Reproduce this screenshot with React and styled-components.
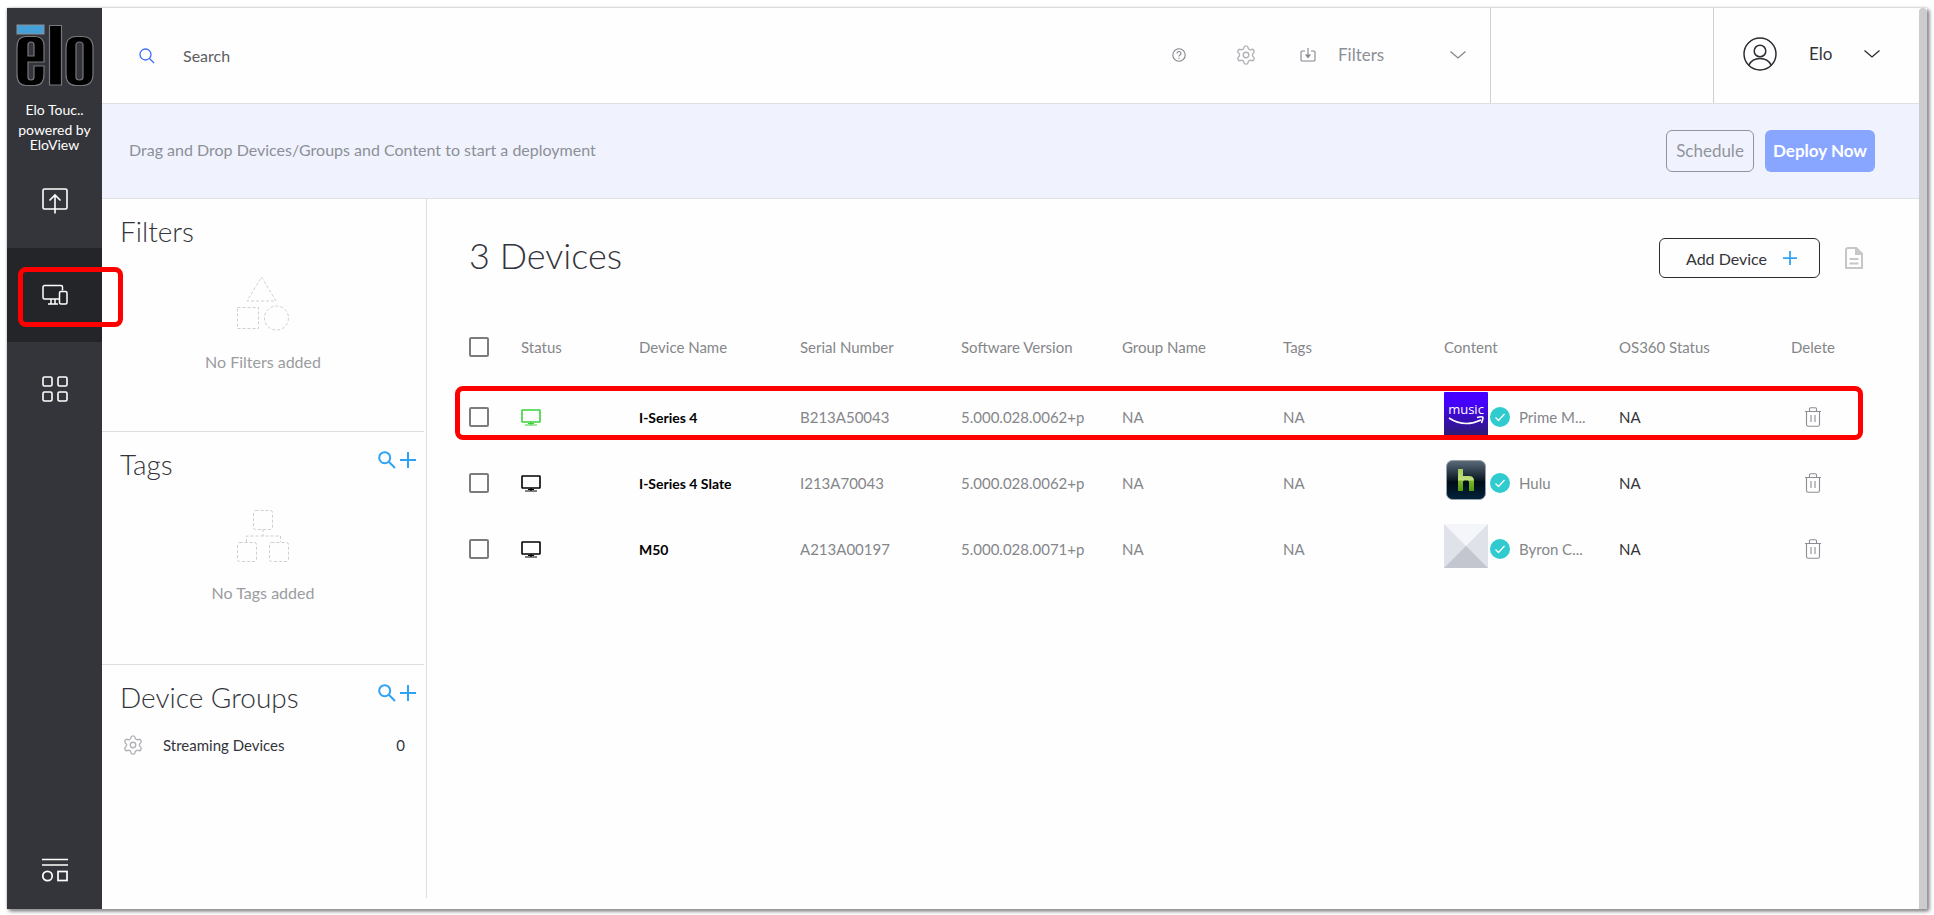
import React, { useState } from 'react'
import styled, { createGlobalStyle } from "styled-components";
import { Settings } from "lucide-react";

const data = [
  {
    name: "I-Series 4",
    serial: "B213A50043",
    version: "5.000.028.0062+p",
    content: "Prime M...",
    thumb: "music",
    online: true,
    highlighted: true
  },
  {
    name: "I-Series 4 Slate",
    serial: "I213A70043",
    version: "5.000.028.0062+p",
    content: "Hulu",
    thumb: "hulu"
  },
  {
    name: "M50",
    serial: "A213A00197",
    version: "5.000.028.0071+p",
    content: "Byron C...",
    thumb: "blank"
  },
]

const columns = [
  "Status",
  "Device Name",
  "Serial Number",
  "Software Version",
  "Group Name",
  "Tags",
  "Content",
  "OS360 Status",
  "Delete",
];

const Logo = () => (
  <svg width="78" height="64" viewBox="0 0 78 64" role="img" aria-label="elo">
    <rect x="1" y="1" width="27" height="9" fill="#46a0d8" stroke="#8a9298" />
    <g fill="#000" stroke="#77787b" strokeWidth="1.2" fillRule="evenodd">
      <path d="M10 12.500H19C25 12.500 28 16 28 22V38H12V53Q12 56 15 56T18 53V42H28V50C28 58 25 61.500 19 61.500H10C4 61.500 1 58 1 50V24C1 16 4 12.500 10 12.500ZM12 21V32H18V21Q18 18 15 18T12 21Z" />
      <path d="M33.500 1.500H45.500V61H33.500Z" />
      <path d="M60 12.500H66C74 12.500 77 17 77 24V50C77 57 74 61.500 66 61.500H60C53 61.500 50 57 50 50V24C50 17 53 12.500 60 12.500ZM60 21V53Q60 56 63.500 56T67 53V21Q67 18 63.500 18T60 21Z" />
    </g>
  </svg>
)

const DeployIcon = () => (
  <svg width="26" height="26" viewBox="0 0 26 26" fill="none" stroke="#fff" strokeWidth="1.6">
    <rect x="1" y="1" width="24" height="20" rx="1.500" />
    <path d="M13 25.500V7M7.500 12.500L13 7L18.500 12.500" />
  </svg>
)

const DevicesIcon = () => (
  <svg width="26" height="22" viewBox="0 0 26 22" fill="none" stroke="#fff" strokeWidth="1.5">
    <path d="M17 15H2.500A1.500 1.500 0 0 1 1 13.500V3A1.500 1.500 0 0 1 2.500 1.500H19A1.500 1.500 0 0 1 20.500 3V6.500M9 15V20M13 15V20M6 20H16" />
    <rect x="17.500" y="7.500" width="7.500" height="12.500" rx="1.500" />
  </svg>
)

const GridIcon = () => (
  <svg width="26" height="26" viewBox="0 0 26 26" fill="none" stroke="#fff" strokeWidth="1.6">
    <rect x="1" y="1" width="9" height="9" rx="1.500" />
    <rect x="16" y="1" width="9" height="9" rx="1.500" />
    <rect x="1" y="16" width="9" height="9" rx="1.500" />
    <rect x="16" y="16" width="9" height="9" rx="1.500" />
  </svg>
)

const WidgetsIcon = () => (
  <svg width="26" height="24" viewBox="0 0 26 24" fill="none" stroke="#fff" strokeWidth="1.7">
    <path d="M0 1.500H26M0 7H26" />
    <circle cx="5.500" cy="18" r="4.700" />
    <rect x="16" y="13.500" width="9" height="9" />
  </svg>
)

const ThinSearch = () => (
  <svg width="16" height="16" viewBox="0 0 16 16" fill="none" stroke="#3b6dff" strokeWidth="1.300">
    <circle cx="6.500" cy="6.500" r="5.500" />
    <path d="M10.500 10.500L15 15" />
  </svg>
)

const BoldSearch = () => (
  <svg width="18" height="18" viewBox="0 0 18 18" fill="none" stroke="#2ea3f5" strokeWidth="2">
    <circle cx="6.700" cy="6.700" r="5.500" />
    <path d="M10.800 10.800L17 17" />
  </svg>
)

const Plus = ({ size, weight }) => (
  <svg width={size} height={size} viewBox="0 0 16 16" fill="none" stroke="#2ea3f5" strokeWidth={weight}>
    <path d="M8 0V16M0 8H16" />
  </svg>
)

const Help = () => (
  <svg width="14" height="14" viewBox="0 0 14 14" fill="none" stroke="#84868c" strokeWidth="1.100">
    <circle cx="7" cy="7" r="6.200" />
    <path d="M5 5.500A2 1.900 0 1 1 7.800 7.200Q7 7.600 7 8.600M7 9.700V10.900" />
  </svg>
)

const Gear = () => <Settings size={22} color="#b0b1b6" strokeWidth={1.5} />

const Import = () => (
  <svg width="16" height="14" viewBox="0 0 16 14" fill="none" stroke="#84868c" strokeWidth="1.100">
    <path d="M5 3H2Q1 3 1 4V12Q1 13 2 13H14Q15 13 15 12V4Q15 3 14 3H11M8 0V8" />
    <path d="M6 7H10L8 9.500Z" fill="#84868c" />
  </svg>
)

const Chevron = ({ color }) => (
  <svg width="16" height="8" viewBox="0 0 16 8" fill="none" stroke={color} strokeWidth="1.300">
    <path d="M0.500 0.500L8 7L15.500 0.500" />
  </svg>
)

const Avatar = () => (
  <svg width="34" height="34" viewBox="0 0 34 34" fill="none" stroke="#2b2c32" strokeWidth="1.500">
    <circle cx="17" cy="17" r="16" />
    <circle cx="17" cy="14" r="5.800" />
    <path d="M6 28Q9 21.500 17 21.500T28 28" />
  </svg>
)

const Report = () => (
  <svg width="18" height="22" viewBox="0 0 18 22" fill="none" stroke="#c6c7c9" strokeWidth="2">
    <path d="M3 1H11L17 7V21H1V3Q1 1 3 1Z" strokeLinejoin="round" />
    <path d="M11 1V7H17Z" fill="#c6c7c9" />
    <path d="M4.500 12H13.500M4.500 16.500H13.500" />
  </svg>
)

const Shapes = () => (
  <svg width="54" height="56" viewBox="0 0 54 56" fill="none" stroke="#cfcfd3" strokeDasharray="3 2">
    <path d="M25.500 1L40 25H11Z" />
    <rect x="1.500" y="31.500" width="21" height="21" />
    <circle cx="40.500" cy="42" r="12" />
  </svg>
)

const Tree = () => (
  <svg width="54" height="54" viewBox="0 0 54 54" fill="none" stroke="#cfcfd3" strokeDasharray="3 2">
    <rect x="17.500" y="1.500" width="19" height="19" rx="2" />
    <rect x="1.500" y="33.500" width="19" height="19" rx="2" />
    <rect x="33.500" y="33.500" width="19" height="19" rx="2" />
    <path d="M27 20V27M10.500 33V27H44.500V33" />
  </svg>
)

const Monitor = ({ online }) => (
  <svg width="20" height="17" viewBox="0 0 20 17" fill="none" stroke={online ? "#3ad13a" : "#000"} strokeWidth="1.600" role="img" aria-label={online ? "Online" : "Offline"}>
    <rect x="1" y="1" width="18" height="12" rx="0.500" />
    <path d="M10 13V15.500M7 14.500H13M4 16H16" strokeWidth="1.200" />
  </svg>
)

const Check = () => (
  <svg width="20" height="20" viewBox="0 0 20 20" fill="none">
    <circle cx="10" cy="10" r="10" fill="#2fcbcf" />
    <path d="M5.500 10.500L8.500 13.500L14.500 7" stroke="#fff" strokeWidth="1.300" />
  </svg>
)

const Trash = () => (
  <svg width="16" height="20" viewBox="0 0 16 20" fill="none" stroke="#8b8d95" strokeWidth="1.100">
    <path d="M0 4.500H16M4.500 4.500V2Q4.500 0.800 5.700 0.800H10.300Q11.500 0.800 11.500 2V4.500M1.500 4.500V17.500Q1.500 19.300 3.300 19.300H12.700Q14.500 19.300 14.500 17.500V4.500M6 8V15M10 8V15" />
  </svg>
)

const Thumb = ({ kind }) => {
  if (kind === "music") {
    return (
      <svg width="44" height="44" viewBox="0 0 44 44">
        <defs>
          <linearGradient id="music" x1="0" y1="0" x2="0" y2="1">
            <stop offset="0.250" stopColor="#4600ff" />
            <stop offset="1" stopColor="#2c1c70" />
          </linearGradient>
        </defs>
        <rect width="44" height="44" rx="1" fill="url(#music)" />
        <text x="22" y="22" textAnchor="middle" fontSize="13" fontFamily="Open Sans" fill="#fff">music</text>
        <path d="M5 26Q20 36 37 28M33 25.500Q39 24 39 25.500T37.500 31" fill="none" stroke="#fff" strokeWidth="1.600" />
      </svg>
    )
  }
  if (kind === "hulu") {
    return (
      <svg width="44" height="44" viewBox="0 0 44 44">
        <defs>
          <linearGradient id="hulu" x1="0" y1="0" x2="0" y2="1">
            <stop offset="0" stopColor="#5b6c7b" />
            <stop offset="0.500" stopColor="#0d1a24" />
            <stop offset="0.550" stopColor="#000d16" />
            <stop offset="1" stopColor="#02233c" />
          </linearGradient>
          <linearGradient id="leaf" x1="0" y1="0" x2="0" y2="1">
            <stop offset="0" stopColor="#a3cd5c" />
            <stop offset="0.500" stopColor="#c3e07f" />
            <stop offset="0.550" stopColor="#7fb52f" />
            <stop offset="1" stopColor="#529a10" />
          </linearGradient>
        </defs>
        <rect x="2.500" y="2.500" width="39" height="39" rx="6" fill="url(#hulu)" stroke="#9aa3aa" />
        <path d="M14 11H19V18H25Q30 18 30 23V33H25V24Q25 22.500 23.500 22.500H20.500Q19 22.500 19 24V33H14Z" fill="url(#leaf)" />
      </svg>
    )
  }
  return (
    <svg width="44" height="44" viewBox="0 0 44 44">
      <rect width="44" height="44" fill="#dfe2e9" />
      <path d="M0 0H44L22 22Z" fill="#f4f6fa" />
      <path d="M0 44H44L22 22Z" fill="#c3c6cf" />
    </svg>
  )
}

const App = () => {

  const [page, setPage] = useState("devices");
  const [selected, setSelected] = useState([]);

  const toggle = (name) => {
    setSelected(selected.includes(name) ? selected.filter((n) => n !== name) : [...selected, name]);
  }

  const toggleAll = () => {
    setSelected(selected.length === data.length ? [] : data.map((device) => device.name));
  }

  return (
    <Frame>
      <GlobalStyle />
      <Sidebar>
        <Brand>
          <Logo />
          <p>Elo Touc..</p>
          <small>powered by EloView</small>
        </Brand>
        <NavButton aria-label="Deploy" $active={page === "deploy"} onClick={() => setPage("deploy")}><DeployIcon /></NavButton>
        <NavButton aria-label="Devices" $active={page === "devices"} onClick={() => setPage("devices")}>
          <DevicesIcon />
          <NavMark />
        </NavButton>
        <NavButton aria-label="Apps" $active={page === "apps"} onClick={() => setPage("apps")}><GridIcon /></NavButton>
        <NavButton aria-label="Widgets" $last onClick={() => setPage("widgets")}><WidgetsIcon /></NavButton>
      </Sidebar>
      <Page>
        <Header>
          <SearchBox>
            <ThinSearch />
            <input type="text" placeholder="Search" aria-label="Search" />
          </SearchBox>
          <Tools>
            <IconButton aria-label="Help"><Help /></IconButton>
            <IconButton aria-label="Settings"><Gear /></IconButton>
            <FilterButton>
              <Import />
              <span>Filters</span>
              <Chevron color="#84868c" />
            </FilterButton>
          </Tools>
          <Spacer />
          <Account>
            <Avatar />
            <span>Elo</span>
            <Chevron color="#2b2c32" />
          </Account>
        </Header>
        <Banner>
          <p>Drag and Drop Devices/Groups and Content to start a deployment</p>
          <Schedule>Schedule</Schedule>
          <Deploy>Deploy Now</Deploy>
        </Banner>
        <Body>
          <Panels>
            <Panel>
              <PanelHead><h2>Filters</h2></PanelHead>
              <Empty>
                <Shapes />
                <p>No Filters added</p>
              </Empty>
            </Panel>
            <Panel>
              <PanelHead>
                <h2>Tags</h2>
                <IconButton aria-label="Search tags"><BoldSearch /></IconButton>
                <IconButton aria-label="Add tag"><Plus size="16" weight="2" /></IconButton>
              </PanelHead>
              <Empty>
                <Tree />
                <p>No Tags added</p>
              </Empty>
            </Panel>
            <Panel>
              <PanelHead>
                <h2>Device Groups</h2>
                <IconButton aria-label="Search device groups"><BoldSearch /></IconButton>
                <IconButton aria-label="Add device group"><Plus size="16" weight="2" /></IconButton>
              </PanelHead>
              <Group>
                <Gear />
                <span>Streaming Devices</span>
                <span>0</span>
              </Group>
            </Panel>
          </Panels>
          <Main>
            <TitleRow>
              <h1>3 Devices</h1>
              <AddButton>Add Device <Plus size="14" weight="2" /></AddButton>
              <IconButton aria-label="Report"><Report /></IconButton>
            </TitleRow>
            <Table>
              <colgroup>
                <col className="check" />
                <col className="status" />
                <col /><col /><col /><col /><col />
                <col className="content" />
                <col />
                <col className="delete" />
              </colgroup>
              <thead>
                <tr>
                  <th><Checkbox aria-label="Select all" checked={selected.length === data.length} onChange={toggleAll} /></th>
                  {
                    columns.map((column) => <th key={column}>{column}</th>)
                  }
                </tr>
              </thead>
              <tbody>
                {
                  data.map((device) => {
                    return (
                      <tr key={device.name}>
                        <td>
                          <Checkbox aria-label={device.name} checked={selected.includes(device.name)} onChange={() => toggle(device.name)} />
                          {device.highlighted && <RowMark />}
                        </td>
                        <td><Monitor online={device.online} /></td>
                        <td className="name">{device.name}</td>
                        <td>{device.serial}</td>
                        <td>{device.version}</td>
                        <td>NA</td>
                        <td>NA</td>
                        <td>
                          <Content>
                            <Thumb kind={device.thumb} />
                            <Check />
                            <span>{device.content}</span>
                          </Content>
                        </td>
                        <td className="os">NA</td>
                        <td><IconButton aria-label={"Delete " + device.name}><Trash /></IconButton></td>
                      </tr>
                    )
                  })
                }
              </tbody>
            </Table>
          </Main>
        </Body>
      </Page>
      <Scrollbar />
    </Frame>
  )
}

export default App

const GlobalStyle = createGlobalStyle`
  *{
    box-sizing:border-box;
    margin:0;
    padding:0;
  }
  body{
    background:#fff;
    font-family:Lato, "Liberation Sans", sans-serif;
    font-size:16px;
    color:#33343a;
  }
  button, input{
    font:inherit;
    color:inherit;
    background:none;
    border:none;
  }
  button{
    cursor:pointer;
  }
  svg{
    display:block;
    flex-shrink:0;
  }
`;

const Frame = styled.div`
  display:flex;
  min-height:calc(100vh - 15px);
  margin:8px 7px 7px;
  background:#fefefe;
  box-shadow:0 0 2px #bbb, 2px 2px 4px #666;
`;

const Sidebar = styled.nav`
  display:flex;
  flex-direction:column;
  width:95px;
  flex-shrink:0;
  background:#34353a;
`;

const Brand = styled.div`
  display:flex;
  flex-direction:column;
  align-items:center;
  height:146px;
  padding-top:16px;
  color:#fff;
  font-size:14px;
  line-height:15px;
  text-align:center;
  p{
    margin:14px 0 5px;
  }
  small{
    width:80px;
    font-size:14px;
  }
`;

const NavButton = styled.button`
  position:relative;
  display:flex;
  align-items:center;
  justify-content:center;
  height:${(props) => props.$last ? "78px" : "94px"};
  background:${(props) => props.$active ? "#242529" : "transparent"};
  margin-top:${(props) => props.$last ? "auto" : "0"};
`;

const NavMark = styled.span`
  position:absolute;
  top:19px;
  left:11px;
  right:-21px;
  height:60px;
  border:5px solid #f00;
  border-radius:8px;
  z-index:1;
`;

const Page = styled.div`
  display:flex;
  flex-direction:column;
  flex:1;
  min-width:0;
`;

const Header = styled.header`
  display:flex;
  height:96px;
  border-bottom:1px solid #dedfe3;
`;

const SearchBox = styled.div`
  display:flex;
  align-items:center;
  flex:1;
  gap:28px;
  padding-left:37px;
  input{
    flex:1;
    height:40px;
    outline:none;
  }
  input::placeholder{
    color:#5c5d61;
    opacity:1;
  }
`;

const IconButton = styled.button`
  display:flex;
  align-items:center;
  justify-content:center;
`;

const Tools = styled.div`
  display:flex;
  align-items:center;
  gap:49px;
  padding:0 24px 2px 0;
  border-right:1px solid #cfcfd2;
`;

const FilterButton = styled.button`
  display:flex;
  align-items:center;
  gap:22px;
  margin-left:-6px;
  color:#8d8f96;
  font-size:17px;
  span{
    width:90px;
    text-align:left;
  }
`;

const Spacer = styled.div`
  width:223px;
  border-right:1px solid #cfcfd2;
`;

const Account = styled.button`
  display:flex;
  align-items:center;
  gap:32px;
  width:205px;
  padding:0 0 4px 29px;
  font-size:17px;
`;

const Banner = styled.section`
  display:flex;
  align-items:center;
  gap:11px;
  height:95px;
  padding:0 44px 0 27px;
  background:#f0f3fd;
  border-bottom:1px solid #dedfe3;
  p{
    flex:1;
    padding-bottom:4px;
    color:#8d8f98;
  }
`;

const Schedule = styled.button`
  height:42px;
  width:88px;
  padding-bottom:2px;
  border:1px solid #92949c;
  border-radius:6px;
  color:#92949c;
  font-size:17px;
`;

const Deploy = styled.button`
  height:42px;
  width:110px;
  padding-bottom:2px;
  border-radius:6px;
  background:#88a6ff;
  color:#fff;
  font-size:17px;
  font-weight:bold;
`;

const Body = styled.div`
  display:flex;
  flex:1;
`;

const Panels = styled.aside`
  width:325px;
  flex-shrink:0;
  margin-bottom:11px;
  border-right:1px solid #dedee0;
`;

const Panel = styled.section`
  height:233px;
  margin-right:2px;
  border-bottom:1px solid #dedee0;
  &:last-child{
    border-bottom:none;
  }
`;

const PanelHead = styled.div`
  display:flex;
  align-items:center;
  gap:4px;
  height:56px;
  padding:0 8px 0 18px;
  h2{
    flex:1;
    padding-top:8px;
    font-size:28px;
    font-weight:300;
  }
`;

const Empty = styled.div`
  display:flex;
  flex-direction:column;
  align-items:center;
  gap:20px;
  padding-top:21px;
  color:#9b9c9f;
`;

const Group = styled.div`
  display:flex;
  align-items:center;
  gap:19px;
  padding:13px 19px 0 20px;
  font-size:15px;
  span:last-child{
    margin-left:auto;
  }
`;

const Main = styled.main`
  flex:1;
  min-width:0;
  padding:37px 53px 20px 42px;
`;

const TitleRow = styled.div`
  display:flex;
  align-items:center;
  height:44px;
  h1{
    flex:1;
    padding-bottom:6px;
    font-size:36px;
    font-weight:300;
    line-height:36px;
  }
  > :last-child{
    margin:0 3px 0 25px;
  }
`;

const AddButton = styled.button`
  display:flex;
  align-items:center;
  justify-content:space-between;
  width:161px;
  height:40px;
  padding:0 22px 0 26px;
  border:1px solid #2b2c32;
  border-radius:6px;
`;

const Table = styled.table`
  width:100%;
  margin-top:30px;
  border-collapse:collapse;
  table-layout:fixed;
  font-size:15px;
  color:#85868a;
  .check{
    width:52px;
  }
  .status{
    width:118px;
  }
  .content{
    width:175px;
  }
  .delete{
    width:86px;
  }
  th{
    height:74px;
    font-weight:normal;
    text-align:left;
  }
  td{
    height:66px;
  }
  th:last-child{
    padding-right:20px;
    text-align:center;
  }
  td:last-child{
    padding-right:20px;
  }
  td:last-child button{
    margin:0 auto;
  }
  tbody tr{
    position:relative;
  }
  .name{
    color:#000;
    font-size:14px;
    font-weight:bold;
  }
  .os{
    color:#33343a;
  }
`;

const Checkbox = styled.input.attrs({ type: "checkbox" })`
  display:block;
  width:20px;
  height:20px;
  appearance:none;
  border:2px solid #7c7c7e;
  border-radius:2px;
  &:checked{
    background:#2ea3f5;
  }
`;

const RowMark = styled.span`
  position:absolute;
  top:2px;
  left:-14px;
  right:3px;
  height:54px;
  border:5px solid #f00;
  border-radius:8px;
  pointer-events:none;
`;

const Content = styled.div`
  display:flex;
  align-items:center;
  gap:2px;
  svg:first-child{
    margin-bottom:6px;
  }
  span{
    margin-left:7px;
  }
`;

const Scrollbar = styled.div`
  width:8px;
  flex-shrink:0;
  background:#cbccce;
  border-radius:4px 4px 0 0;
`;
